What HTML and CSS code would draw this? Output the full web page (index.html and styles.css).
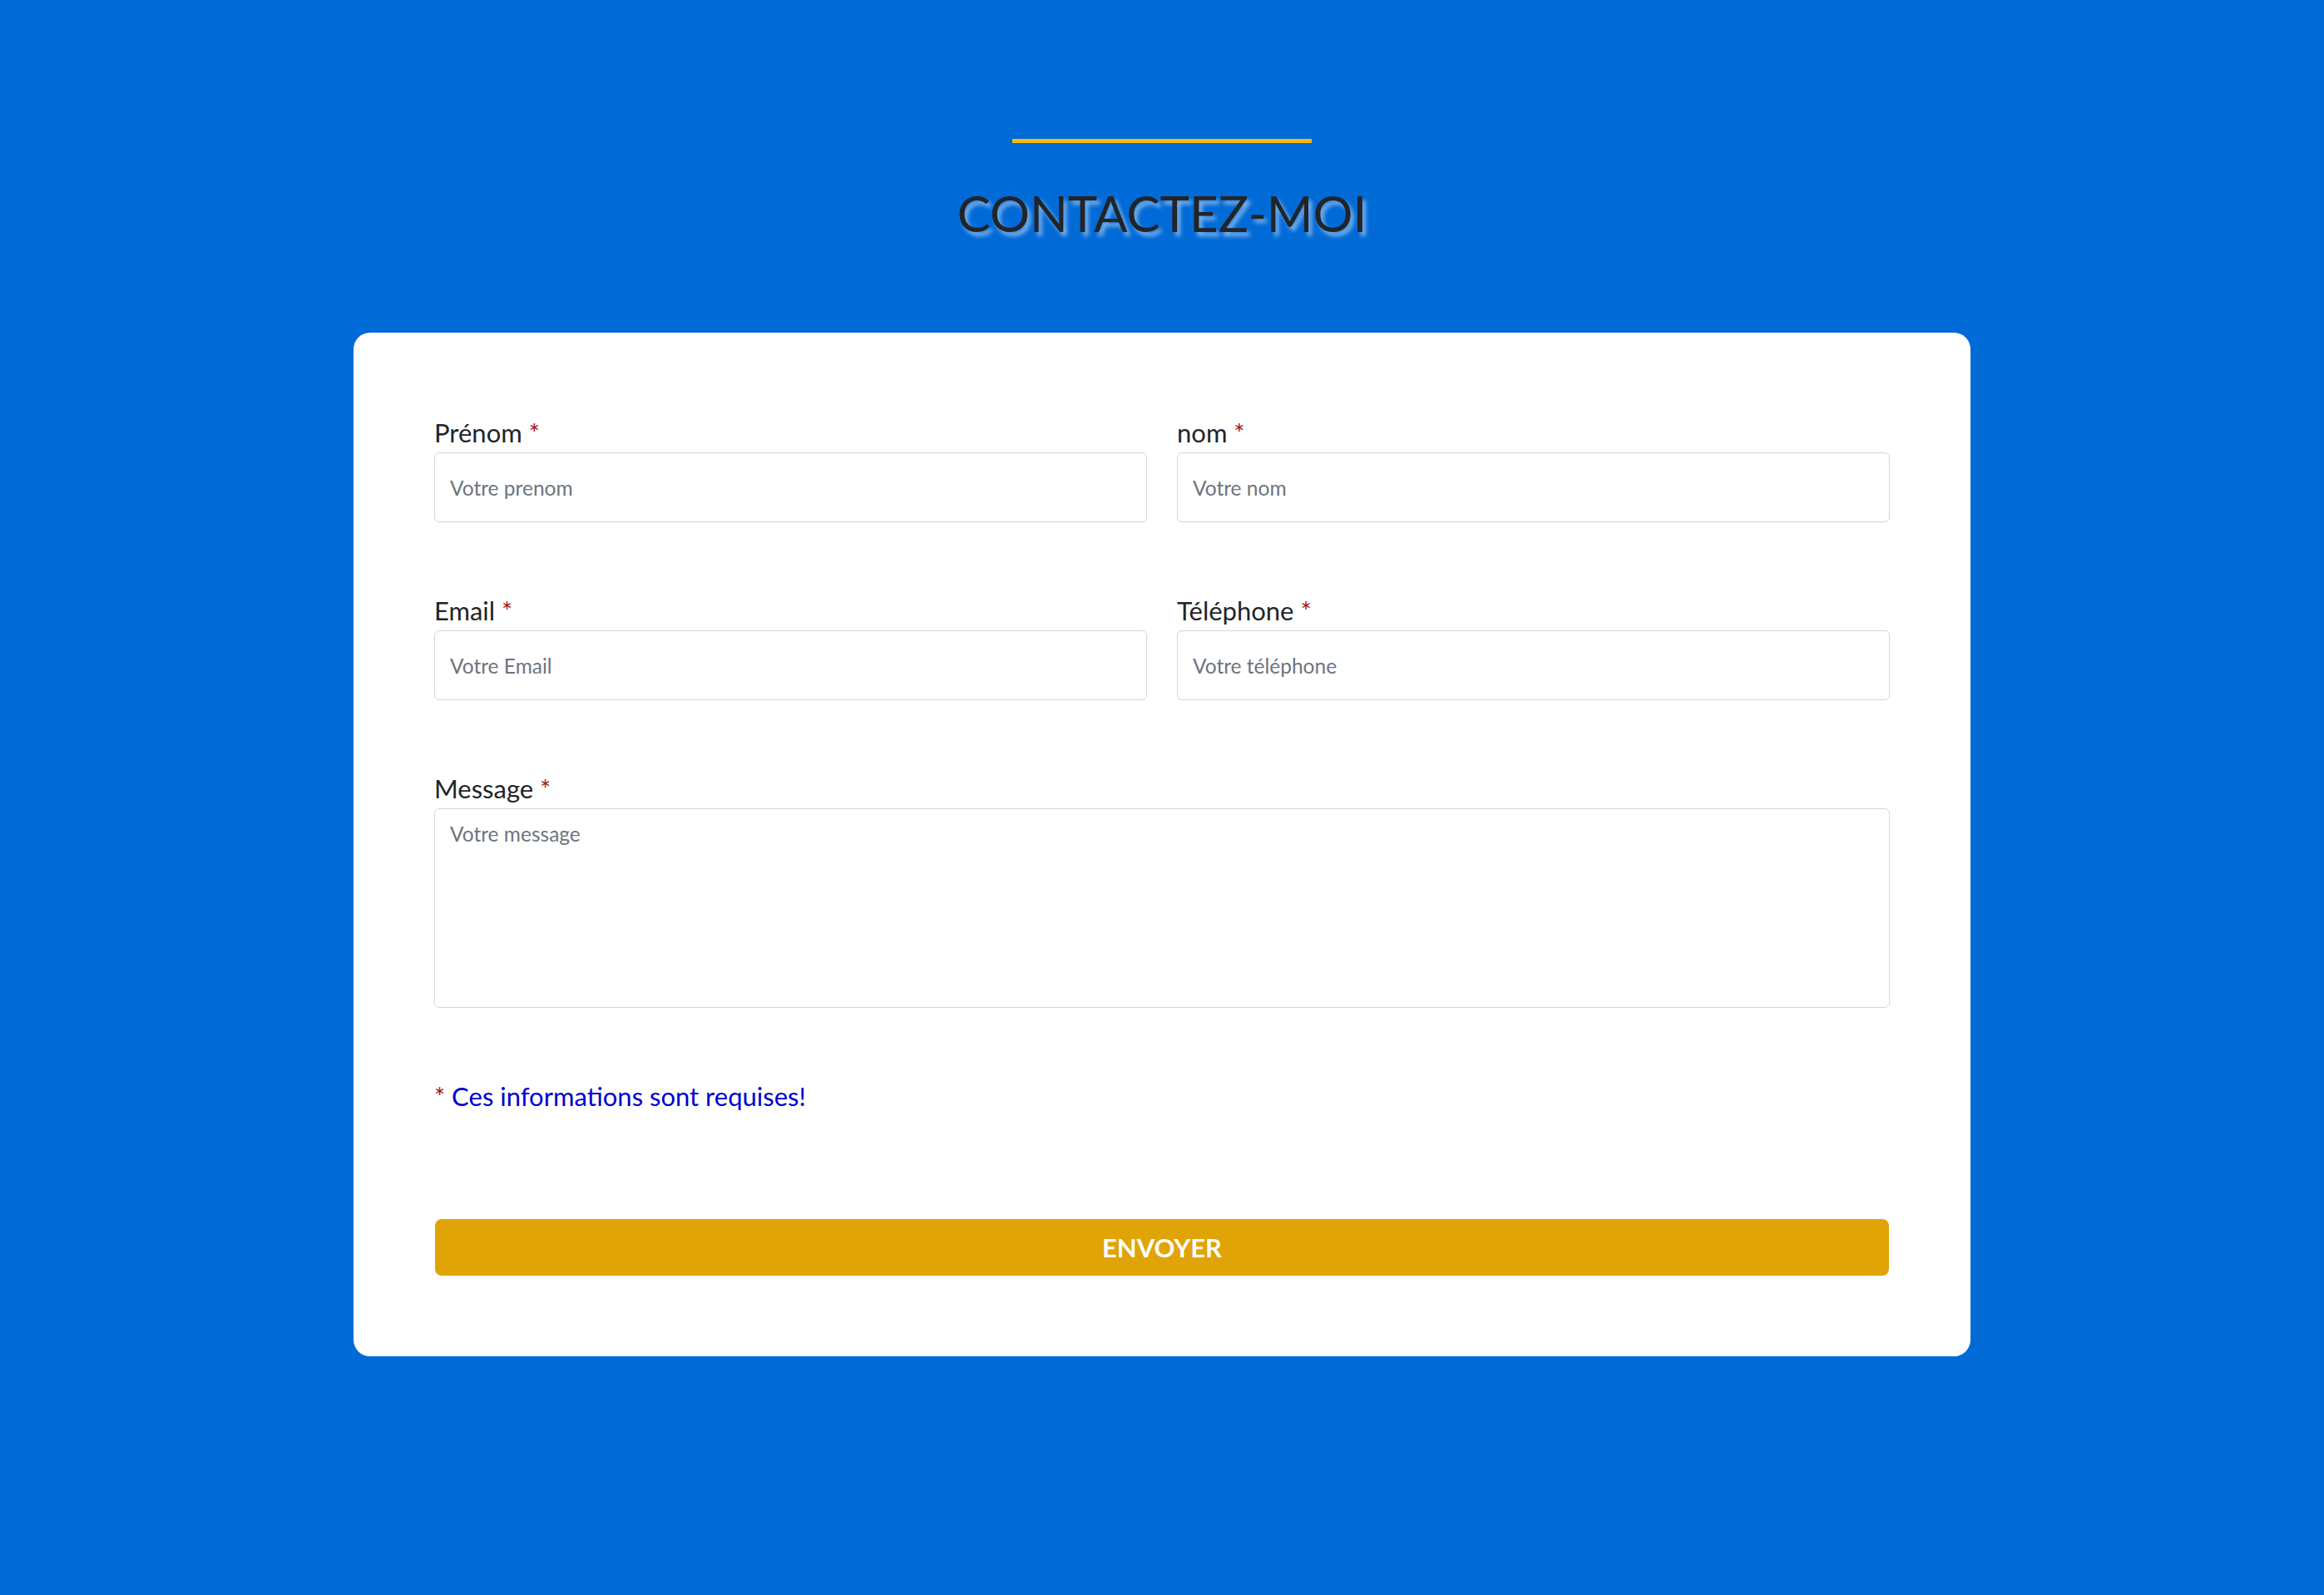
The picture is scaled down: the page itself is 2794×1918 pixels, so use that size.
FILE: index.html
```html
<!DOCTYPE html>
<html lang="fr">
<head>
<meta charset="utf-8">
<title>Contactez-moi</title>
<link rel="stylesheet" href="styles.css">
</head>
<body>
<section class="contact">
  <header class="contact-head">
    <div class="bar"></div>
    <h1 class="title">CONTACTEZ-MOI</h1>
  </header>
  <form class="card">
    <div class="grid">
      <div class="field">
        <label class="label" for="prenom">Prénom <span class="req">*</span></label>
        <input class="control" id="prenom" type="text" placeholder="Votre prenom">
      </div>
      <div class="field">
        <label class="label" for="nom">nom <span class="req">*</span></label>
        <input class="control" id="nom" type="text" placeholder="Votre nom">
      </div>
      <div class="field">
        <label class="label" for="email">Email <span class="req">*</span></label>
        <input class="control" id="email" type="email" placeholder="Votre Email">
      </div>
      <div class="field">
        <label class="label" for="tel">Téléphone <span class="req">*</span></label>
        <input class="control" id="tel" type="tel" placeholder="Votre téléphone">
      </div>
      <div class="field full">
        <label class="label" for="msg">Message <span class="req">*</span></label>
        <textarea class="control area" id="msg" placeholder="Votre message"></textarea>
      </div>
      <p class="note full"><span class="req">*</span> Ces informations sont requises!</p>
    </div>
    <button class="submit" type="button">ENVOYER</button>
  </form>
</section>
</body>
</html>
```
FILE: styles.css
```css
html, body {
  margin: 0;
  padding: 0;
}
body {
  background: #006ad7;
  font-family: Lato, "Noto Sans", sans-serif;
  color: #212529;
  min-height: 1918px;
}
.contact {
  display: flex;
  flex-direction: column;
  align-items: center;
  padding-top: 167px;
}
.contact-head {
  display: flex;
  flex-direction: column;
  align-items: center;
}
.bar {
  width: 360px;
  height: 5px;
  background: #f5b90f;
}
.title {
  margin: 48px 0 0;
  font-size: 60px;
  line-height: 72px;
  font-weight: 400;
  color: #222428;
  text-shadow: 4px 5px 5px rgba(255, 255, 255, 0.5);
}
.card {
  box-sizing: border-box;
  width: 1944px;
  margin-top: 108px;
  background: #fff;
  border-radius: 20px;
  padding: 102px 97px 97px;
}
.grid {
  display: grid;
  grid-template-columns: 1fr 1fr;
  column-gap: 36px;
  row-gap: 88px;
}
.field {
  display: flex;
  flex-direction: column;
}
.full {
  grid-column: 1 / -1;
}
.label {
  font-size: 31px;
  line-height: 36px;
  margin-bottom: 6px;
  color: #212529;
}
.req {
  color: #a31515;
}
.control {
  box-sizing: border-box;
  height: 84px;
  border: 1px solid #d3d6da;
  border-radius: 6px;
  padding: 0 18px;
  font-family: Lato, "Noto Sans", sans-serif;
  font-size: 24.5px;
  color: #212529;
  background: #fff;
  outline: none;
}
.control::placeholder {
  color: #6c757d;
  opacity: 1;
}
.area {
  height: 240px;
  padding: 11px 18px;
  line-height: 37px;
  resize: none;
}
.note {
  margin: 0;
  font-size: 31px;
  line-height: 36px;
  color: #0000d0;
}
.submit {
  display: block;
  box-sizing: border-box;
  width: calc(100% - 2px);
  margin: 130px 1px 0;
  height: 68px;
  border: none;
  border-radius: 8px;
  background: #e0a406;
  color: #fff;
  font-family: Lato, "Noto Sans", sans-serif;
  font-weight: 700;
  font-size: 31px;
}
```
